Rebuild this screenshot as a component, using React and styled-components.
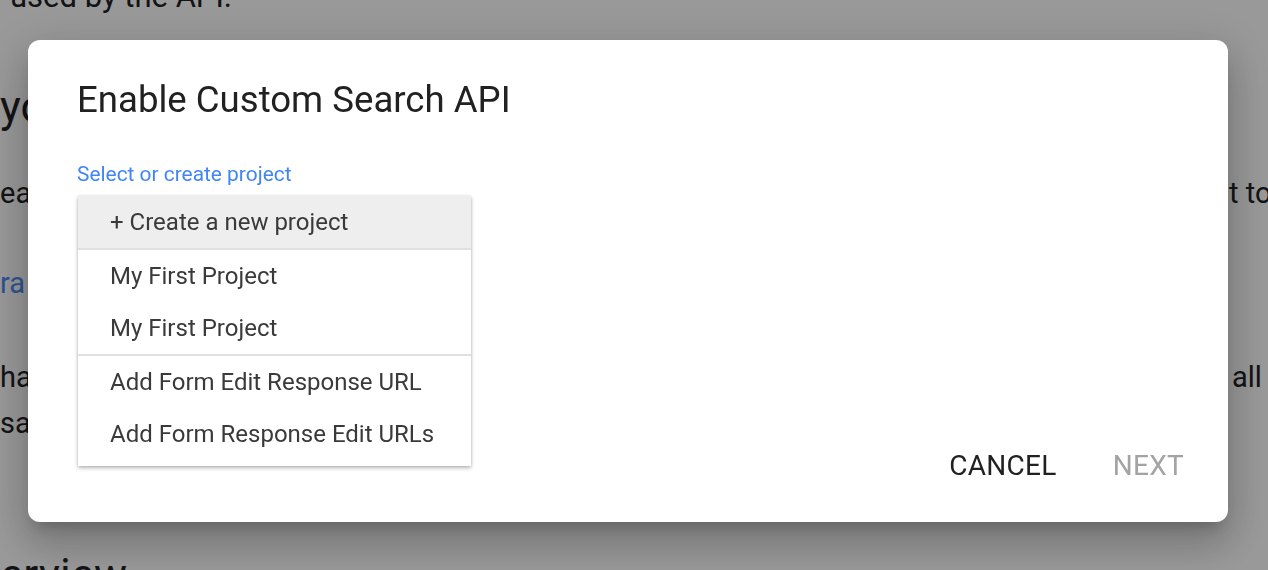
import React from "react";
import styled, { createGlobalStyle } from "styled-components";

const Global = createGlobalStyle`
  html, body { margin: 0; padding: 0; }
  body {
    font-family: Roboto, "Noto Sans", Arial, sans-serif;
    background: #ffffff;
    width: 1268px;
    height: 570px;
    overflow: hidden;
  }
`;

const Page = styled.div`
  width: 1268px;
  height: 570px;
  overflow: hidden;
  background: #ffffff;
  color: #202124;
  display: flex;
  flex-direction: column;
`;

const Line = styled.div`
  flex: none;
  display: grid;
  grid-template-columns: 1228px 1fr;
  white-space: nowrap;
  overflow: hidden;
  margin-top: ${(p) => p.$top || 0}px;
  height: ${(p) => p.$h}px;
  font-size: ${(p) => p.$size}px;
  line-height: ${(p) => p.$h}px;
  color: ${(p) => (p.$link ? "#4a8af4" : "#202124")};
`;

const Frag = styled.span`
  padding-left: ${(p) => p.$pad || 0}px;
`;

const Overlay = styled.div`
  position: fixed;
  inset: 0;
  background: rgba(0, 0, 0, 0.4);
  display: flex;
  align-items: flex-start;
  padding: 40px 0 0 28px;
`;

const Dialog = styled.div`
  width: 1200px;
  height: 482px;
  box-sizing: border-box;
  background: #ffffff;
  border-radius: 12px;
  box-shadow: 0 11px 15px -7px rgba(0, 0, 0, 0.2), 0 24px 38px 3px rgba(0, 0, 0, 0.14),
    0 9px 46px 8px rgba(0, 0, 0, 0.12);
  padding: 38px 44px 0 49px;
  display: flex;
  flex-direction: column;
  position: relative;
`;

const Title = styled.h2`
  margin: 0;
  font-weight: 400;
  font-size: 36.6px;
  line-height: 44px;
  color: #212121;
`;

const Label = styled.div`
  margin-top: 39px;
  font-size: 20.9px;
  line-height: 26px;
  color: #4285f4;
`;

const Menu = styled.ul`
  list-style: none;
  margin: 9px 0 0 1px;
  padding: 0 0 6px;
  width: 393px;
  background: #ffffff;
  box-shadow: 0 2px 4px rgba(0, 0, 0, 0.28), 0 0 2px rgba(0, 0, 0, 0.12);
`;

const Item = styled.li`
  height: 52px;
  display: flex;
  align-items: center;
  padding-left: 32px;
  font-size: 24px;
  color: #3a3a3a;
  background: ${(p) => (p.$active ? "#eeeeee" : "transparent")};
`;

const Divider = styled.li`
  height: 2px;
  background: #e0e0e0;
`;

const Actions = styled.div`
  position: absolute;
  right: 34px;
  bottom: 34px;
  display: flex;
  gap: 36px;
`;

const Button = styled.button`
  border: 0;
  background: none;
  padding: 4px 10px;
  font-family: inherit;
  font-size: 28px;
  line-height: 36px;
  letter-spacing: 0.3px;
  color: ${(p) => (p.disabled ? "#a3a3a3" : "#212121")};
  cursor: ${(p) => (p.disabled ? "default" : "pointer")};
`;

export default function App() {
  return (
    <>
      <Global />
      <Page>
        <Line $h={46} $size={31} $top={-26}>
          <Frag $pad={10}>used by the API.</Frag>
          <Frag />
        </Line>
        <Line $h={60} $size={44} $top={57}>
          <Frag>you</Frag>
          <Frag />
        </Line>
        <Line $h={46} $size={29} $top={33}>
          <Frag>ea</Frag>
          <Frag $pad={1}>t to</Frag>
        </Line>
        <Line $h={46} $size={29} $link $top={44}>
          <Frag>ra</Frag>
          <Frag />
        </Line>
        <Line $h={46} $size={29} $top={48}>
          <Frag>hav</Frag>
          <Frag $pad={4}>all</Frag>
        </Line>
        <Line $h={46} $size={29}>
          <Frag>sa</Frag>
          <Frag />
        </Line>
        <Line $h={60} $size={44} $top={99}>
          <Frag>erview</Frag>
          <Frag />
        </Line>
      </Page>
      <Overlay>
        <Dialog>
          <Title>Enable Custom Search API</Title>
          <Label>Select or create project</Label>
          <Menu>
            <Item $active>+ Create a new project</Item>
            <Divider />
            <Item>My First Project</Item>
            <Item>My First Project</Item>
            <Divider />
            <Item>Add Form Edit Response URL</Item>
            <Item>Add Form Response Edit URLs</Item>
          </Menu>
          <Actions>
            <Button>CANCEL</Button>
            <Button disabled>NEXT</Button>
          </Actions>
        </Dialog>
      </Overlay>
    </>
  );
}
